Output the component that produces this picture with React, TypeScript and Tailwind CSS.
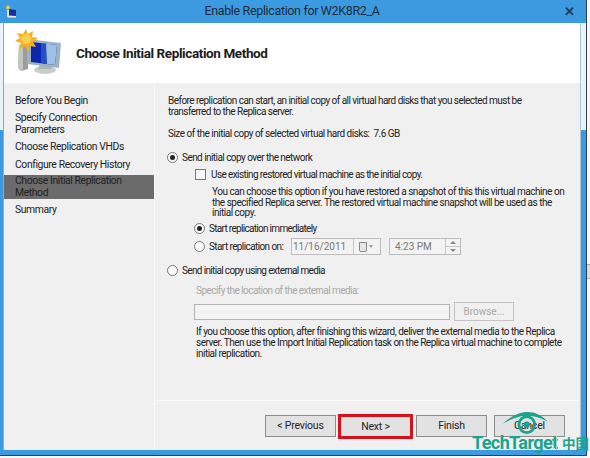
import React from 'react';

const navItems = [
  { label: 'Before You Begin', cls: 'mt-[12px] mb-[5px]' },
  { label: 'Specify Connection Parameters', cls: 'mb-[5px]' },
  { label: 'Choose Replication VHDs', cls: 'mb-[6px]' },
  { label: 'Configure Recovery History', cls: 'mb-[4px]' },
  { label: 'Choose Initial Replication Method', cls: 'mb-[5px] bg-[#6b6b6b]' },
  { label: 'Summary', cls: '' },
];

const Radio = ({ checked }: { checked?: boolean }) => (
  <span className="w-[11px] h-[11px] rounded-full border border-[#777] bg-[#fbfbfb] flex items-center justify-center shrink-0">
    {checked && <span className="w-[5px] h-[5px] rounded-full bg-[#222]" />}
  </span>
);

const WizardIcon = () => (
  <svg width="50" height="50" viewBox="0 0 50 50" className="shrink-0">
    <ellipse cx="34" cy="42" rx="11" ry="4" fill="#c9cdce" />
    <path d="M29 36h10l2 5H27z" fill="#aeb4b5" />
    <path d="M8 17l9-2v26l-7 2-3-3z" fill="#9a9d98" />
    <path d="M8 17l4 1v24l-2 1-3-3z" fill="#c4c6c2" />
    <path d="M16 11l34 4-2 25-32-4z" fill="#9fb2c4" />
    <path d="M20 14l26 3-2 20-24-3z" fill="#0c27ad" />
    <path d="M30 15l16 2-2 20-8-1z" fill="#9fc0e2" />
    <path d="M30 15l5 0.6L36 36l-6-1z" fill="#2450c8" />
    <path d="M15 1l2 5 5-3-1 6 6 1-5 4 3 5-6-1-2 5-3-5-5 3 1-6-6-2 5-3-3-5 6 1z" fill="#f5b01c" />
    <circle cx="15" cy="11" r="5" fill="#fbd04e" />
  </svg>
);

const TitleIcon = () => (
  <svg width="12" height="13" viewBox="0 0 12 13" className="shrink-0">
    <circle cx="3" cy="2.5" r="2" fill="#f2c438" />
    <path d="M2 5h2v7H2z" fill="#ddd" />
    <path d="M4 4l7 1v6l-7-1z" fill="#17318f" />
    <path d="M3 11h8v1.5H3z" fill="#e8eef2" />
  </svg>
);

const WizardButton = ({ label, className = '' }: { label: string; className?: string }) => (
  <button className={`h-[22px] border border-[#8d8d8d] bg-[#e2e2e2] text-[#222] text-[10.5px] tracking-[-0.2px] ${className}`}>
    {label}
  </button>
);

export default function App() {
  return (
    <div
      className="relative w-[590px] h-[458px] overflow-hidden bg-[#f8f8f8] text-[10px] text-[#222]"
      style={{ fontFamily: 'Roboto, "Noto Sans", sans-serif' }}
    >
      <div className="w-[587px] h-[456px] flex flex-col border-r border-b border-[#30404c] bg-[#3c9be0]">
        {/* Title bar */}
        <div className="h-[23px] flex items-center pl-[5px] pr-[11px] shrink-0">
          <TitleIcon />
          <div className="flex-1 text-center text-[12.5px] tracking-[-0.35px] text-[#1b2c3c] pl-[3px]">Enable Replication for W2K8R2_A</div>
          <span className="text-[13px] font-bold text-[#1d3a55] leading-none">✕</span>
        </div>

        <div className="flex-1 flex min-h-0">
          <div className="w-[4px] shrink-0 bg-[linear-gradient(#eaf3fa_107px,#3c9be0_107px)] border-r border-[#9aa6ad]" />

          <div className="flex-1 flex flex-col min-w-0 bg-[#f0f0f0]">
            {/* Header */}
            <div className="h-[60px] bg-white flex items-center pl-[7px] shrink-0">
              <WizardIcon />
              <h1 className="ml-[15px] text-[13.5px] tracking-[-0.4px] font-bold text-[#1c1c1c]">Choose Initial Replication Method</h1>
            </div>

            <div className="flex-1 flex min-h-0">
              {/* Steps */}
              <nav className="w-[151px] shrink-0 border-r border-[#fafafa] text-[10.4px] leading-[12px] tracking-[-0.4px]">
                {navItems.map((item) => (
                  <div key={item.label} className={`pl-[11px] pr-[20px] ${item.cls}`}>
                    {item.label}
                  </div>
                ))}
              </nav>

              {/* Content */}
              <div className="flex-1 flex flex-col min-w-0 pl-[1px]">
                <div className="flex-1 pl-[12px] pt-[12px] leading-[11px] min-h-0 whitespace-nowrap">
                  <p className="tracking-[-0.54px]">
                    Before replication can start, an initial copy of all virtual hard disks that you selected must be
                    <br />
                    transferred to the Replica server.
                  </p>
                  <p className="mt-[11px] tracking-[-0.5px]">Size of the initial copy of selected virtual hard disks:&nbsp; 7.6 GB</p>

                  <div className="mt-[13px] -ml-[1px] flex items-center gap-[4px]">
                    <Radio checked />
                    <span className="tracking-[-0.55px]">Send initial copy over the network</span>
                  </div>

                  <div className="pl-[27px] mt-[6px]">
                    <div className="flex items-center gap-[5px]">
                      <span className="w-[11px] h-[11px] border border-[#777] bg-[#f8f8f8] shrink-0" />
                      <span className="tracking-[-0.6px]">Use existing restored virtual machine as the initial copy.</span>
                    </div>
                    <p className="mt-[7px] ml-[17px] leading-[10.7px] tracking-[-0.48px]">
                      You can choose this option if you have restored a snapshot of this this virtual machine on
                      <br />
                      the specified Replica server. The restored virtual machine snapshot will be used as the
                      <br />
                      initial copy.
                    </p>
                  </div>

                  <div className="pl-[26px] mt-[4px] flex items-center gap-[4px]">
                    <Radio checked />
                    <span className="tracking-[-0.7px]">Start replication immediately</span>
                  </div>

                  <div className="pl-[26px] mt-[4px] h-[17px] flex items-center">
                    <Radio />
                    <span className="ml-[4px] w-[82px] shrink-0 tracking-[-0.6px]">Start replication on:</span>
                    <div className="w-[90px] h-[17px] border border-[#bdbdbd] flex items-center text-[#777] bg-[#f3f3f3]">
                      <span className="w-[62px] pl-[1px] border-r border-[#c6c6c6] h-full flex items-center">11/16/2011</span>
                      <span className="ml-[5px] w-[8px] h-[10px] border border-[#888] rounded-b-[2px] bg-[#e6e6e6]" />
                      <span className="ml-[2px] w-0 h-0 border-x-[2.5px] border-x-transparent border-t-[3px] border-t-[#999]" />
                    </div>
                    <div className="ml-[8px] w-[72px] h-[17px] border border-[#bdbdbd] flex items-center text-[#777] bg-[#f3f3f3]">
                      <span className="flex-1 pl-[5px]">4:23 PM</span>
                      <span className="w-[15px] h-full flex flex-col border-l border-[#c6c6c6]">
                        <span className="flex-1 flex items-center justify-center border-b border-[#c6c6c6]">
                          <span className="w-0 h-0 border-x-[3px] border-x-transparent border-b-[3px] border-b-[#888]" />
                        </span>
                        <span className="flex-1 flex items-center justify-center">
                          <span className="w-0 h-0 border-x-[3px] border-x-transparent border-t-[3px] border-t-[#888]" />
                        </span>
                      </span>
                    </div>
                  </div>

                  <div className="-ml-[1px] mt-[10px] flex items-center gap-[4px]">
                    <Radio />
                    <span className="tracking-[-0.65px]">Send initial copy using external media</span>
                  </div>

                  <div className="pl-[26px]">
                    <p className="ml-[2px] mt-[9px] text-[#a8a8a8] tracking-[-0.55px]">Specify the location of the external media:</p>
                    <div className="mt-[6px] flex items-center gap-[4px]">
                      <div className="w-[256px] h-[16px] border border-[#b4b4b4] bg-[#f3f3f3]" />
                      <div className="w-[60px] h-[19px] border border-[#c4c4c4] text-[#aaa] flex items-center justify-center">Browse...</div>
                    </div>
                    <p className="ml-[2px] mt-[5px] text-[#222] tracking-[-0.5px]">
                      If you choose this option, after finishing this wizard, deliver the external media to the Replica
                      <br />
                      server. Then use the Import Initial Replication task on the Replica virtual machine to complete
                      <br />
                      initial replication.
                    </p>
                  </div>
                </div>

                {/* Footer */}
                <div className="h-[50px] shrink-0 border-t border-[#fafafa] pt-[14px] pl-[109px] flex items-start">
                  <WizardButton label="< Previous" className="w-[71px]" />
                  <div className="ml-[2px] -mt-[1px] w-[75px] h-[25px] border-[3px] border-[#d90f1c] flex">
                    <WizardButton label="Next >" className="w-full h-full border-0" />
                  </div>
                  <WizardButton label="Finish" className="ml-[3px] w-[71px]" />
                  <WizardButton label="Cancel" className="ml-[7px] w-[71px]" />
                </div>
              </div>
            </div>
          </div>

          <div className="w-[6px] shrink-0 bg-[linear-gradient(#eaf3fa_107px,#3c9be0_107px)] border-l border-[#aac4d8]" />
        </div>
        <div className="h-[5px] shrink-0" />
      </div>

      {/* Grey window behind, right edge */}
      <div className="absolute left-[587px] top-[264px] w-[3px] h-[15px] bg-[#dcdcdc] border-y border-[#aaa]" />

      {/* Watermark */}
      <div className="absolute left-[472px] top-[411px] w-[118px] h-[47px] pointer-events-none text-[#1ba38e]">
        <svg width="46" height="24" viewBox="0 0 58 28" className="absolute left-[31px] top-0">
          <path d="M0 15C12 3 24 0 31 0c9 0 18 4 25 12C46 7 38 5 30 5 20 5 10 9 0 15z" fill="currentColor" />
          <circle cx="30" cy="16" r="10" fill="none" stroke="currentColor" strokeWidth="3.5" />
          <circle cx="30" cy="16" r="4" fill="currentColor" />
        </svg>
        <span className="absolute left-0 top-[20px] text-[18px] font-bold leading-[24px] tracking-[-0.6px] whitespace-nowrap">
          TechTarget
        </span>
        <span className="absolute left-[84px] top-[25px] w-px h-[14px] bg-[#9cd4ca]" />
        <span
          className="absolute left-[90px] top-[24px] text-[13.5px] font-bold leading-[17px] whitespace-nowrap"
          style={{ fontFamily: '"Noto Sans CJK SC", sans-serif' }}
        >
          中国
        </span>
      </div>
    </div>
  );
}
